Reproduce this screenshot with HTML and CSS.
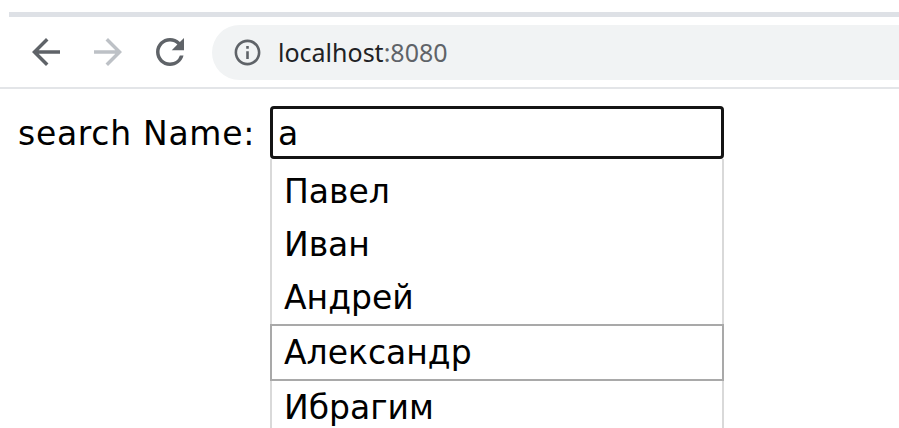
FILE: index.html
```html
<!DOCTYPE html>
<html lang="ru">
<head>
<meta charset="utf-8">
<title>localhost:8080</title>
<link rel="stylesheet" href="styles.css">
</head>
<body>
  <header class="browser">
    <div class="tabstrip"></div>
    <div class="toolbar">
      <button class="nav-btn" type="button" aria-label="Back">
        <svg viewBox="0 0 24 24" class="nav-icon"><path d="M20 11H7.83l5.59-5.59L12 4l-8 8 8 8 1.41-1.41L7.83 13H20v-2z"/></svg>
      </button>
      <button class="nav-btn nav-btn--disabled" type="button" aria-label="Forward">
        <svg viewBox="0 0 24 24" class="nav-icon"><path d="M4 11h12.17l-5.59-5.59L12 4l8 8-8 8-1.41-1.41L16.17 13H4v-2z"/></svg>
      </button>
      <button class="nav-btn" type="button" aria-label="Reload">
        <svg viewBox="0 0 24 24" class="nav-icon"><path d="M17.65 6.35A7.958 7.958 0 0 0 12 4c-4.42 0-7.99 3.58-7.99 8s3.57 8 7.99 8c3.73 0 6.84-2.55 7.73-6h-2.08A5.99 5.99 0 0 1 12 18c-3.31 0-6-2.69-6-6s2.69-6 6-6c1.66 0 3.14.69 4.22 1.78L13 11h7V4l-2.35 2.35z"/></svg>
      </button>
      <div class="omnibox">
        <svg viewBox="0 0 24 24" class="info-icon"><path d="M11 7h2v2h-2zm0 4h2v6h-2zm1-9C6.48 2 2 6.48 2 12s4.48 10 10 10 10-4.48 10-10S17.52 2 12 2zm0 18c-4.41 0-8-3.59-8-8s3.59-8 8-8 8 3.59 8 8-3.59 8-8 8z"/></svg>
        <span class="url"><span class="url-host">localhost</span><span class="url-port">:8080</span></span>
      </div>
    </div>
  </header>

  <main class="page">
    <form class="search" autocomplete="off">
      <label class="search-label" for="name">search Name:</label>
      <div class="field">
        <input id="name" class="search-input" type="text" value="a">
        <div class="suggestions">
          <div class="suggestion">Павел</div>
          <div class="suggestion">Иван</div>
          <div class="suggestion">Андрей</div>
          <div class="suggestion suggestion--active">Александр</div>
          <div class="suggestion">Ибрагим</div>
        </div>
      </div>
    </form>
  </main>
</body>
</html>
```
FILE: styles.css
```css
html, body {
  margin: 0;
  padding: 0;
  background: #fff;
  overflow: hidden;
}

body {
  width: 899px;
  height: 428px;
}

/* Browser chrome */
.browser {
  background: #fff;
  padding-top: 12px;
}

.tabstrip {
  height: 5px;
  margin-left: 9px;
  background: #dee1e6;
}

.toolbar {
  display: flex;
  align-items: center;
  height: 70px;
  padding-left: 15px;
  border-bottom: 2px solid #e3e5e8;
  overflow: hidden;
}

.nav-btn {
  display: flex;
  align-items: center;
  justify-content: center;
  width: 62px;
  height: 62px;
  padding: 0;
  border: 0;
  background: transparent;
  flex: none;
}

.nav-icon {
  width: 42px;
  height: 42px;
  fill: #5f6368;
}

.nav-btn--disabled .nav-icon {
  fill: #bdc1c6;
}

.omnibox {
  display: flex;
  align-items: center;
  flex: none;
  width: 760px;
  height: 55px;
  margin-left: 11px;
  padding-left: 20px;
  box-sizing: border-box;
  border-radius: 28px;
  background: #f1f3f4;
}

.info-icon {
  width: 31px;
  height: 31px;
  fill: #5f6368;
  flex: none;
}

.url {
  margin-left: 15px;
  font-family: "Noto Sans", "Open Sans", sans-serif;
  font-size: 25px;
  line-height: 30px;
}

.url-host {
  color: #202124;
}

.url-port {
  color: #5f6368;
}

/* Page */
.page {
  padding: 17px 0 0 18px;
  font-family: "DejaVu Sans", Verdana, sans-serif;
  font-size: 33px;
  color: #000;
}

.search {
  display: flex;
  align-items: baseline;
  gap: 15px;
  margin: 0;
}

.search-label {
  line-height: 33px;
  letter-spacing: 0.7px;
}

.field {
  display: flex;
  flex-direction: column;
  width: 454px;
}

.search-input {
  box-sizing: border-box;
  width: 454px;
  height: 53px;
  margin: 0;
  padding: 2px 5px 0;
  border: 3px solid #141414;
  border-radius: 4px;
  outline: none;
  font: inherit;
  color: #000;
  background: #fff;
}

.suggestions {
  padding-top: 6px;
  border-left: 2px solid #d9d9d9;
  border-right: 2px solid #d9d9d9;
}

.suggestion {
  padding: 10px 12px;
  line-height: 33px;
  white-space: nowrap;
}

.suggestion--active {
  margin: 0 -2px;
  border: 2px solid #a9a9a9;
}
```
